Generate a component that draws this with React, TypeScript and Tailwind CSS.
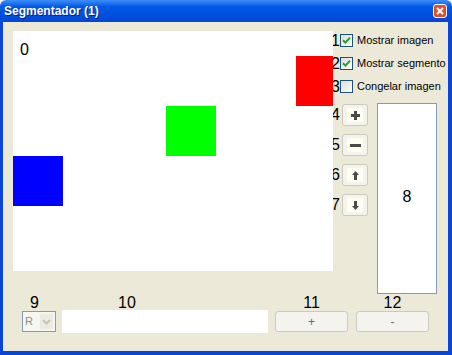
import React from 'react';

const Check = () => (
  <svg width="9" height="9" viewBox="0 0 9 9">
    <path d="M1 4.2 L3.4 6.6 L8 1.6" fill="none" stroke="#21a121" strokeWidth="2" />
  </svg>
);

const CheckRow = ({ n, label, checked }: { n: string; label: string; checked: boolean }) => (
  <div className="flex items-center h-[13px]">
    <div className="w-[7px] flex justify-end text-[16px] leading-[13px] text-black">{n}</div>
    <div className="w-[13px] h-[13px] border border-[#1c5180] bg-gradient-to-br from-[#dcdcd7] to-white flex items-center justify-center">
      {checked && <Check />}
    </div>
    <span className="ml-[4px] text-[11px] leading-[13px] text-black whitespace-nowrap">{label}</span>
  </div>
);

const SmallButton = ({ n, icon }: { n: string; icon: React.ReactNode }) => (
  <div className="flex items-center h-[22px]">
    <div className="w-[7px] flex justify-end text-[16px] leading-[16px] text-black">{n}</div>
    <div className="ml-[2px] w-[26px] h-[22px] rounded-[3px] border border-[#cdcabb] bg-[#f4f3ee] flex items-center justify-center">
      <div className="w-[16px] h-[14px] bg-[#fdfdf0] flex items-center justify-center">{icon}</div>
    </div>
  </div>
);

const plus = (
  <svg width="9" height="9" viewBox="0 0 9 9">
    <path d="M3 0h3v3h3v3H6v3H3V6H0V3h3z" fill="#4a4a4a" />
  </svg>
);
const minus = (
  <svg width="11" height="9" viewBox="0 0 11 9">
    <rect x="0" y="3" width="11" height="3" fill="#4a4a4a" />
  </svg>
);
const up = (
  <svg width="7" height="9" viewBox="0 0 7 9">
    <path d="M3.5 0L7 4H5v5H2V4H0z" fill="#4a4a4a" />
  </svg>
);
const down = (
  <svg width="7" height="9" viewBox="0 0 7 9">
    <path d="M2 0h3v5h2L3.5 9 0 5h2z" fill="#4a4a4a" />
  </svg>
);

export default function App() {
  return (
    <div className="w-[452px] h-[355px] flex flex-col bg-white" style={{ fontFamily: '"Liberation Sans", Arial, sans-serif' }}>
      {/* title bar */}
      <div className="h-[22px] rounded-t-[6px] bg-gradient-to-b from-[#3d8ef7] via-[#0058e8] via-30% to-[#0048d4] flex items-center justify-between pl-[4px] pr-[5px]">
        <span className="text-white font-bold text-[12px] leading-none [text-shadow:1px_1px_0_#0a1e8c]">Segmentador (1)</span>
        <div className="w-[14px] h-[14px] rounded-[3px] border border-white bg-[#e0502d] flex items-center justify-center">
          <svg width="8" height="8" viewBox="0 0 8 8">
            <path d="M1 1L7 7M7 1L1 7" stroke="white" strokeWidth="2" />
          </svg>
        </div>
      </div>

      {/* client area */}
      <div className="flex-1 border-l-[3px] border-r-[4px] border-b-[4px] border-[#0845d8] bg-[#ece9d8] flex flex-col">
        <div className="flex items-start pl-[10px] pt-[9px] h-[272px]">
          {/* image canvas */}
          <div className="relative w-[320px] h-[240px] bg-white overflow-hidden pl-[7px] pt-[7px]">
            <span className="text-[16px] leading-[16px] text-black">0</span>
            <div className="absolute left-[283px] top-[25px] w-[50px] h-[50px] bg-[#ff0000]" />
            <div className="absolute left-[153px] top-[75px] w-[50px] h-[50px] bg-[#00ff00]" />
            <div className="absolute left-0 top-[125px] w-[50px] h-[50px] bg-[#0000ff]" />
          </div>

          {/* controls */}
          <div className="flex flex-col pt-[3px]">
            <div className="flex flex-col gap-[10px]">
              <CheckRow n="1" label="Mostrar imagen" checked />
              <CheckRow n="2" label="Mostrar segmento" checked />
              <CheckRow n="3" label="Congelar imagen" checked={false} />
            </div>
            <div className="flex items-start mt-[10px]">
              <div className="flex flex-col gap-[8px] mt-[1px]">
                <SmallButton n="4" icon={plus} />
                <SmallButton n="5" icon={minus} />
                <SmallButton n="6" icon={up} />
                <SmallButton n="7" icon={down} />
              </div>
              <div className="ml-[9px] w-[60px] h-[191px] border border-[#7f9db9] bg-white flex items-center justify-center">
                <span className="text-[16px] leading-[16px] text-black -mt-[4px]">8</span>
              </div>
            </div>
          </div>
        </div>

        {/* bottom row */}
        <div className="flex items-start pl-[19px] pt-[1px]">
          <div className="flex flex-col w-[34px]">
            <span className="pl-[8px] text-[16px] leading-[15px] text-black">9</span>
            <div className="mt-[1px] h-[21px] border border-[#7f9db9] bg-[#f7f6f0] flex items-center">
              <span className="flex-1 pl-[2px] text-[11px] text-[#8c8c8c]">R</span>
              <div className="w-[15px] h-[17px] mr-[1px] rounded-[2px] bg-[#ebeae3] border border-[#f5f5f0] flex items-center justify-center">
                <svg width="9" height="6" viewBox="0 0 9 6">
                  <path d="M1 1L4.5 4.5L8 1" fill="none" stroke="#c4c3bc" strokeWidth="2" />
                </svg>
              </div>
            </div>
          </div>
          <div className="flex flex-col ml-[6px] w-[206px]">
            <span className="pl-[56px] text-[16px] leading-[15px] text-black">10</span>
            <div className="h-[23px] bg-white" />
          </div>
          <div className="flex flex-col ml-[7px] w-[73px] items-center">
            <span className="text-[16px] leading-[15px] text-black">11</span>
            <div className="mt-[1px] w-full h-[21px] rounded-[3px] border border-[#cdcabb] bg-[#f4f3ee] flex items-center justify-center text-[12px] text-[#6d6b62]">+</div>
          </div>
          <div className="flex flex-col ml-[8px] w-[73px] items-center">
            <span className="text-[16px] leading-[15px] text-black">12</span>
            <div className="mt-[1px] w-full h-[21px] rounded-[3px] border border-[#cdcabb] bg-[#f4f3ee] flex items-center justify-center text-[12px] text-[#6d6b62]">-</div>
          </div>
        </div>
      </div>
    </div>
  );
}
